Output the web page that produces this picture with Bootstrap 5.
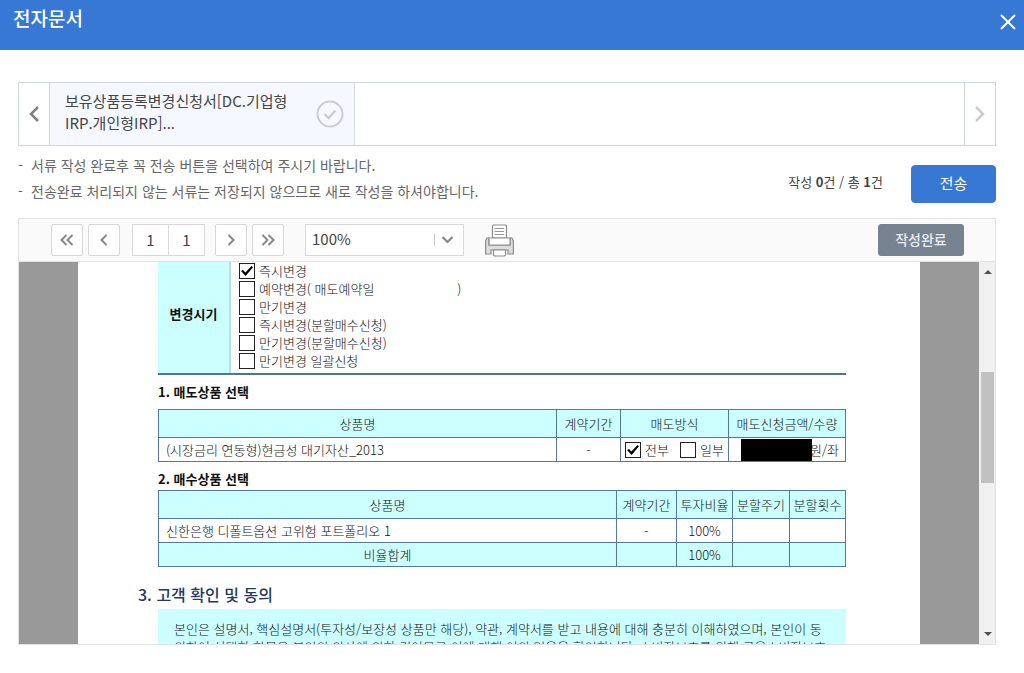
<!DOCTYPE html>
<html lang="ko">
<head>
<meta charset="utf-8">
<meta name="viewport" content="width=device-width, initial-scale=1">
<title>전자문서</title>
<link href="https://cdn.jsdelivr.net/npm/bootstrap@5.3.0/dist/css/bootstrap.min.css" rel="stylesheet">
<style>
  body { font-family: "Noto Sans CJK KR", sans-serif; font-size: 15px; color: #444; background: #fff; }
  button svg { display: block; margin: 0 auto; }
  .topbar { background: #3678d4; height: 50px; padding: 0 8px 0 13px; }
  .topbar h1 { font-size: 19px; line-height: 36px; font-weight: 500; }
  .topbar button { width: 16px; height: 44px; }
  .content-area { padding: 32px 28px 28px 18px; min-height: 0; }
  .doc-tabs { border: 1px solid #cfd3e6; height: 64px; }
  .doc-tabs .tab-arrow { width: 31px; }
  .edge-end { border-right: 1px solid #cfd3e6; }
  .edge-start { border-left: 1px solid #cfd3e6; }
  .doc-tab { width: 305px; padding: 0 10px 0 15px; background: #f5f9ff; border-right: 1px solid #d9dee8; line-height: 22px; color: #444; }
  .doc-tab span { padding-bottom: 4px; }
  .notes { font-size: 14px; line-height: 26px; color: #666; padding-top: 6px; }
  .notes li { padding-left: 13px; position: relative; }
  .notes li::before { content: "-"; position: absolute; left: 0; }
  .send-group { padding-top: 19px; }
  .count-text { font-size: 13px; line-height: 18px; color: #444; padding-bottom: 4px; }
  .btn-send { --bs-btn-bg: #3678d4; --bs-btn-border-color: #3678d4; --bs-btn-color: #fff; width: 85px; height: 38px; font-size: 15px; line-height: 20px; padding: 0 0 2px; border-radius: 4px; }
  .viewer { margin-top: 14px; border: 1px solid #e3e3e3; min-height: 0; }
  .tools { height: 43px; background: #fafafa; border-bottom: 1px solid #e3e3e3; padding: 0 31px 0 32px; }
  .tool-btn { width: 32px; height: 32px; background: #fff; border: 1px solid #d8d8d8; border-radius: 2px; padding: 0; }
  .tool-btn + .tool-btn { margin-left: 5px; }
  .page-group { margin: 0 10px 0 12px; }
  .page-box { width: 37px; height: 32px; border: 1px solid #d8d8d8; background: #fff; color: #444; font-size: 15px; text-align: center; padding: 0 0 2px; }
  .page-box + .page-box { margin-left: -1px; }
  .zoom-field { margin-left: 21px; }
  .zoom-select { width: 159px; height: 32px; border: 1px solid #d8d8d8; border-radius: 0; padding: 0 6px 2px; font-size: 15px; color: #444; background: #fff; appearance: none; }
  .zoom-mark { right: 9px; top: 9px; }
  .btn-done { --bs-btn-bg: #778391; --bs-btn-border-color: #778391; --bs-btn-color: #e8ebef; width: 86px; height: 32px; font-size: 14px; line-height: 20px; font-weight: 500; padding: 0 0 2px; border-radius: 3px; }
  .view-row, .stage { min-height: 0; overflow: hidden; }
  .stage { background: #999; }
  .paper { max-width: 842px; min-height: 100%; padding: 0 74px 0 80px; background: #fff; color: #111; font-size: 13px; line-height: 18px; font-weight: 300; }
  .scroll-rail { width: 16px; background: #f0f0f0; padding: 6px 1px 6px 2px; }
  .rail-thumb { background: #c1c1c1; height: 111px; margin-top: 96px; }
  .timing { border-bottom: 2px solid #4c72a6; }
  .timing-label { width: 73px; background: #cff; border-right: 2px solid #bcdede; font-weight: 700; padding-bottom: 8px; }
  .timing-list { padding: 0 0 3px 8px; }
  .tick { appearance: none; width: 16px; height: 16px; margin: 0; border: 1px solid #222; background: #fff; flex: none; }
  .tick:checked { background: #fff url("data:image/svg+xml,%3Csvg xmlns='http://www.w3.org/2000/svg' viewBox='0 0 14 14'%3E%3Cpath d='M1 7 L3 6 L5.400 8.500 L11.500 2 L13 3.300 L5.600 12 Z'/%3E%3C/svg%3E") center/14px no-repeat; }
  .paper h2 { font-size: 13px; line-height: 18px; font-weight: 700; color: #111; margin: 8px 0 2px; }
  .paper h2.first-title { margin-bottom: 8px; }
  .paper h3 { font-size: 16px; line-height: 24px; font-weight: 500; color: #223a5c; margin: 15px 0 3px -20px; }
  .form-grid { width: 100%; table-layout: fixed; border-collapse: collapse; text-align: center; }
  .form-grid th, .form-grid td { border: 1px solid #5478a6; height: 24px; padding: 0; font-weight: 300; white-space: nowrap; }
  .form-grid th { height: 28px; background: #cff; }
  .form-grid .sum-row td { background: #cff; }
  .form-grid .cell-name { text-align: left; padding-left: 7px; }
  .amount { padding-right: 6px; }
  .redacted { width: 71px; height: 22px; background: #000; margin-right: -2px; z-index: 1; }
  .agree { background: #cff; padding: 11px 19px 10px 16px; }
  .agree p { white-space: nowrap; }
</style>
</head>
<body class="vh-100 d-flex flex-column overflow-hidden">
<header class="topbar d-flex justify-content-between align-items-start text-white flex-shrink-0">
  <h1 class="m-0">전자문서</h1>
  <button type="button" class="btn border-0 p-0" aria-label="닫기">
    <svg width="16" height="16" viewBox="0 0 16 16" fill="none" stroke="#fff" stroke-width="2"><path d="M1 1 L15 15 M15 1 L1 15"/></svg>
  </button>
</header>

<main class="content-area flex-grow-1 d-flex flex-column">
  <nav class="doc-tabs d-flex flex-shrink-0" aria-label="서류 목록">
    <button type="button" class="tab-arrow edge-end btn rounded-0 border-top-0 border-bottom-0 border-start-0 p-0" aria-label="이전">
      <svg width="12" height="18" viewBox="0 0 12 18" fill="none" stroke="#808080" stroke-width="2.500"><path d="M10 2 L3 9 L10 16"/></svg>
    </button>
    <a href="#" class="doc-tab d-flex align-items-center justify-content-between text-decoration-none">
      <span class="text-nowrap">보유상품등록변경신청서[DC.기업형<br>IRP.개인형IRP]...</span>
      <svg width="28" height="28" viewBox="0 0 28 28" fill="none" stroke="#ccc" stroke-width="2"><circle cx="14" cy="14" r="12.500"/><path d="M8.500 14 L12.500 18 L19.500 10.500" stroke-width="2.400"/></svg>
    </a>
    <button type="button" class="tab-arrow edge-start btn rounded-0 border-top-0 border-bottom-0 border-end-0 p-0 ms-auto" aria-label="다음">
      <svg width="12" height="18" viewBox="0 0 12 18" fill="none" stroke="#ccc" stroke-width="2.500"><path d="M2 2 L9 9 L2 16"/></svg>
    </button>
  </nav>

  <div class="d-flex align-items-start flex-shrink-0">
    <ul class="notes list-unstyled m-0 flex-grow-1">
      <li>서류 작성 완료후 꼭 전송 버튼을 선택하여 주시기 바랍니다.</li>
      <li>전송완료 처리되지 않는 서류는 저장되지 않으므로 새로 작성을 하셔야합니다.</li>
    </ul>
    <div class="send-group d-flex align-items-center">
      <span class="count-text me-4 pe-1">작성 <b>0</b>건 / 총 <b>1</b>건</span>
      <button type="button" class="btn btn-send">전송</button>
    </div>
  </div>

  <section class="viewer flex-grow-1 d-flex flex-column">
    <div class="tools d-flex align-items-center flex-shrink-0">
      <button type="button" class="tool-btn" aria-label="첫 페이지"><svg width="14" height="12" viewBox="0 0 14 12" fill="none" stroke="#888" stroke-width="2"><path d="M6.500 1 L1.500 6 L6.500 11 M12.500 1 L7.500 6 L12.500 11"/></svg></button>
      <button type="button" class="tool-btn" aria-label="이전 페이지"><svg width="8" height="12" viewBox="0 0 8 12" fill="none" stroke="#888" stroke-width="2"><path d="M6.500 1 L1.500 6 L6.500 11"/></svg></button>
      <div class="page-group d-flex">
        <input class="page-box" type="text" value="1" aria-label="현재 페이지">
        <input class="page-box" type="text" value="1" aria-label="전체 페이지" readonly>
      </div>
      <button type="button" class="tool-btn" aria-label="다음 페이지"><svg width="8" height="12" viewBox="0 0 8 12" fill="none" stroke="#888" stroke-width="2"><path d="M1.500 1 L6.500 6 L1.500 11"/></svg></button>
      <button type="button" class="tool-btn" aria-label="마지막 페이지"><svg width="14" height="12" viewBox="0 0 14 12" fill="none" stroke="#888" stroke-width="2"><path d="M1.500 1 L6.500 6 L1.500 11 M7.500 1 L12.500 6 L7.500 11"/></svg></button>
      <div class="zoom-field position-relative">
        <select class="zoom-select" aria-label="확대 비율"><option>100%</option><option>150%</option></select>
        <svg class="zoom-mark position-absolute pe-none" width="22" height="14" viewBox="0 0 22 14" fill="none"><path d="M1.500 0 V13" stroke="#ccc"/><path d="M9.500 4 L14.500 9 L19.500 4" stroke="#888" stroke-width="2.200"/></svg>
      </div>
      <button type="button" class="btn border-0 p-0 ms-3 ps-1" aria-label="인쇄">
        <svg width="32" height="34" viewBox="0 0 32 34" fill="#fff" stroke="#8c8c8c" stroke-width="1.200">
          <path d="M8.500 15 V3 L9.500 2 H21.500 L22.500 3 V15 Z"/>
          <path d="M10.500 5.500 H20 M10.500 8.500 H20 M10.500 11.500 H20" stroke="#999"/>
          <path d="M1.600 18 L3 15 H5 V22 H26 V15 H28 L29.400 18 V31 H24 V27 H7 V31 H1.600 Z" fill="#ddd"/>
          <path d="M5 15 H26 V22 H5 Z"/>
          <path d="M9.500 27 H21.500 V32 L20.500 33 H10.500 L9.500 32 Z"/>
        </svg>
      </button>
      <button type="button" class="btn btn-done ms-auto">작성완료</button>
    </div>

    <div class="view-row flex-grow-1 d-flex">
      <div class="stage flex-grow-1">
        <article class="paper mx-auto">
          <div class="timing d-flex">
            <div class="timing-label d-flex align-items-center justify-content-center">변경시기</div>
            <div class="timing-list">
              <label class="d-flex align-items-center"><input type="checkbox" class="tick me-1" checked>즉시변경</label>
              <label class="d-flex align-items-center"><input type="checkbox" class="tick me-1">예약변경( 매도예약일<span class="ms-5 ps-4">&nbsp;&nbsp;&nbsp;)</span></label>
              <label class="d-flex align-items-center"><input type="checkbox" class="tick me-1">만기변경</label>
              <label class="d-flex align-items-center"><input type="checkbox" class="tick me-1">즉시변경(분할매수신청)</label>
              <label class="d-flex align-items-center"><input type="checkbox" class="tick me-1">만기변경(분할매수신청)</label>
              <label class="d-flex align-items-center"><input type="checkbox" class="tick me-1">만기변경 일괄신청</label>
            </div>
          </div>

          <h2 class="first-title">1. 매도상품 선택</h2>
          <table class="form-grid">
            <colgroup><col><col style="width:64px"><col style="width:108px"><col style="width:117px"></colgroup>
            <thead><tr><th>상품명</th><th>계약기간</th><th>매도방식</th><th>매도신청금액/수량</th></tr></thead>
            <tbody><tr>
              <td class="cell-name">(시장금리 연동형)현금성 대기자산_2013</td>
              <td>-</td>
              <td><div class="d-flex justify-content-between px-1">
                <label class="d-flex align-items-center"><input type="checkbox" class="tick me-1" checked>전부</label>
                <label class="d-flex align-items-center"><input type="checkbox" class="tick me-1">일부</label>
              </div></td>
              <td><div class="amount d-flex align-items-center justify-content-end"><span class="redacted"></span>원/좌</div></td>
            </tr></tbody>
          </table>

          <h2>2. 매수상품 선택</h2>
          <table class="form-grid">
            <colgroup><col><col style="width:60px"><col style="width:56px"><col style="width:57px"><col style="width:56px"></colgroup>
            <thead><tr><th>상품명</th><th>계약기간</th><th>투자비율</th><th>분할주기</th><th>분할횟수</th></tr></thead>
            <tbody>
              <tr><td class="cell-name">신한은행 디폴트옵션 고위험 포트폴리오 1</td><td>-</td><td>100%</td><td></td><td></td></tr>
              <tr class="sum-row"><td>비율합계</td><td></td><td>100%</td><td></td><td></td></tr>
            </tbody>
          </table>

          <h3>3. 고객 확인 및 동의</h3>
          <div class="agree">
            <p class="m-0">본인은 설명서, 핵심설명서(투자성/보장성 상품만 해당), 약관, 계약서를 받고 내용에 대해 충분히 이해하였으며, 본인이 동</p>
            <p class="m-0">의하여 선택한 항목은 본인의 의사에 의한 것이므로 이에 대해 이의 없음을 확인합니다. 소비자보호를 위해 금융소비자보호</p>
          </div>
        </article>
      </div>
      <div class="scroll-rail d-flex flex-column flex-shrink-0">
        <svg class="mx-auto" width="8" height="8" viewBox="0 0 8 8" fill="#505050"><path d="M0 6 L4 2 L8 6 Z"/></svg>
        <div class="rail-thumb"></div>
        <svg class="mx-auto mt-auto" width="8" height="8" viewBox="0 0 8 8" fill="#505050"><path d="M0 2 L4 6 L8 2 Z"/></svg>
      </div>
    </div>
  </section>
</main>
<script src="https://cdn.jsdelivr.net/npm/bootstrap@5.3.0/dist/js/bootstrap.bundle.min.js"></script>
</body>
</html>
